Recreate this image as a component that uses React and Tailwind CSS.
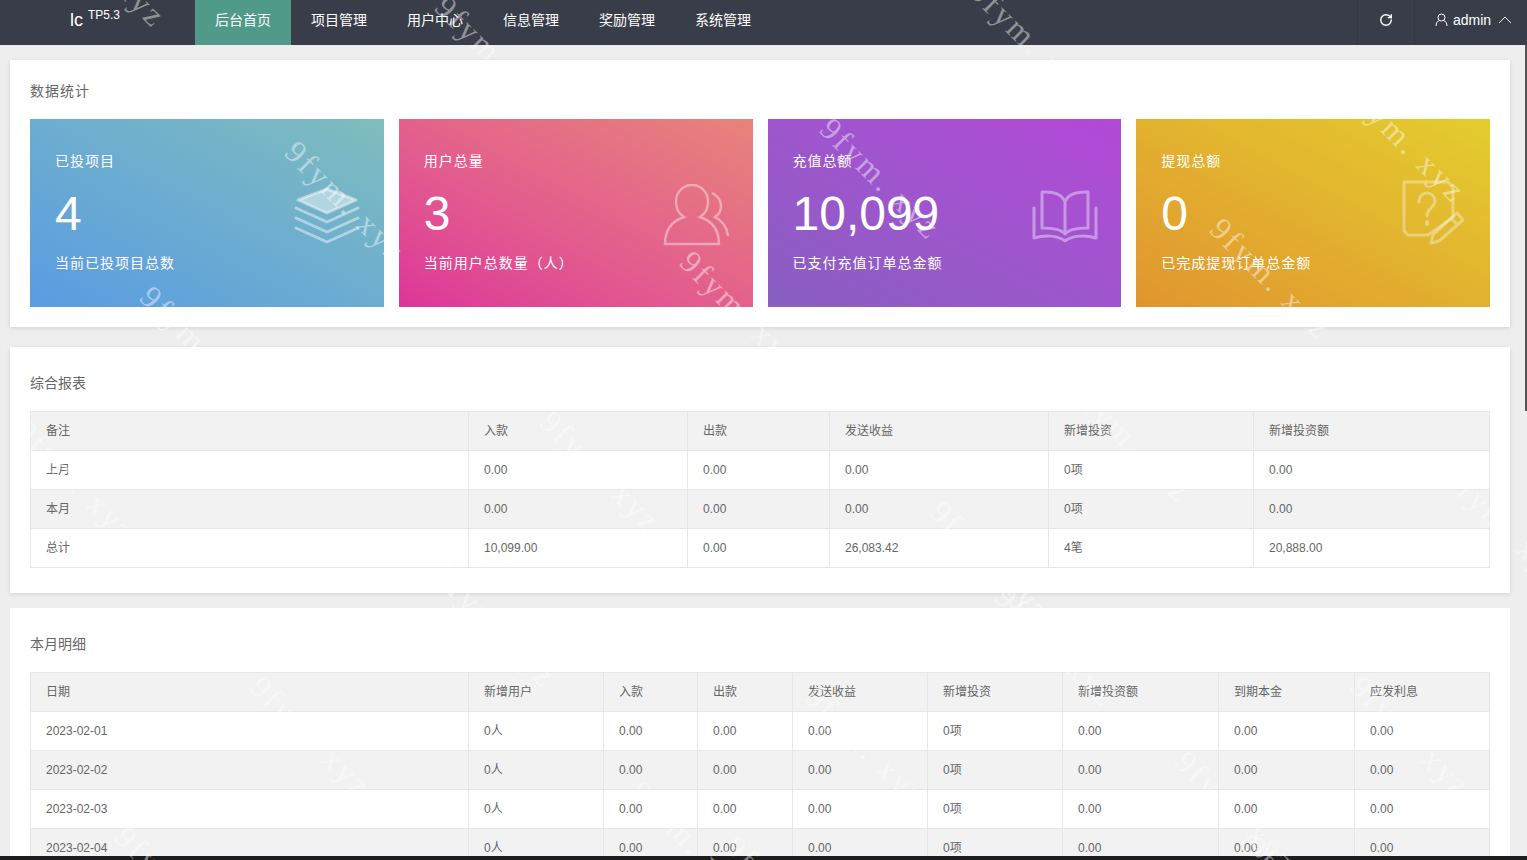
import { RotateCw } from 'lucide-react';

const font = { fontFamily: '"Liberation Sans", "Noto Sans CJK SC", sans-serif' };

const navItems = ['后台首页', '项目管理', '用户中心', '信息管理', '奖励管理', '系统管理'];

const StackIcon = () => (
  <svg width="66" height="58" viewBox="0 0 66 58" className="mt-[6px] text-white/45" fill="none" stroke="currentColor" strokeWidth="3" strokeLinecap="round" strokeLinejoin="round">
    <path d="M33 2 62 13 33 26 4 13Z" fill="currentColor" />
    <path d="M2 21 33 35 64 21" />
    <path d="M2 31 33 45 64 31" />
    <path d="M2 41 33 55 64 41" />
  </svg>
);

const UsersIcon = () => (
  <svg width="66" height="62" viewBox="0 0 66 62" className="mt-[4px] text-white/40" fill="none" stroke="currentColor" strokeWidth="2.4">
    <path d="M2 60h54c0-14-7-23-19-27 5-3 8-9 8-15C45 8 38 1 29 1S13 8 13 18c0 6 3 12 8 15C9 37 2 46 2 60Z" />
    <path d="M49 9c4 2 9 6 9 13 0 5-3 9-6 11 8 4 12 11 13 19" />
  </svg>
);

const BookIcon = () => (
  <svg width="66" height="52" viewBox="0 0 66 52" className="-mr-[1px] mt-[5px] text-white/40" fill="none" stroke="currentColor" strokeWidth="3" strokeLinecap="round" strokeLinejoin="round">
    <path d="M33 12C30 4 22 2 13 2H10v36c10 0 19 1 23 6 4-5 13-6 23-6V2h-3c-9 0-17 2-20 10Zm0 0v32" />
    <path d="M2 18v30c10-3 24-3 31 3 7-6 21-6 31-3V18" />
  </svg>
);

const NoteIcon = () => (
  <svg width="62" height="66" viewBox="0 0 62 66" className="mr-[2px] text-white/35" fill="none" stroke="currentColor" strokeWidth="3" strokeLinejoin="round">
    <path d="M2 2h44l5 5v30L26 55H6l-4-4Z" />
    <path d="M17 22c0-6 4-9 8-9s8 3 8 8c0 6-8 7-8 15" strokeLinecap="round" />
    <path d="M25 42v2" strokeWidth="4" strokeLinecap="round" />
    <path d="M55 33l6 7-24 21-8 2 2-8Zm-6 5 7 7" />
  </svg>
);

const stats = [
  { title: '已投项目', value: '4', note: '当前已投项目总数', bg: 'bg-linear-to-tr from-[#5a9be2] to-[#80bdbd]', icon: <StackIcon /> },
  { title: '用户总量', value: '3', note: '当前用户总数量（人）', bg: 'bg-linear-to-tr from-[#dd3499] to-[#e8837a]', icon: <UsersIcon /> },
  { title: '充值总额', value: '10,099', note: '已支付充值订单总金额', bg: 'bg-linear-to-tr from-[#885fc2] to-[#b348d8]', icon: <BookIcon /> },
  { title: '提现总额', value: '0', note: '已完成提现订单总金额', bg: 'bg-linear-to-tr from-[#e0952f] to-[#e3cd2e]', icon: <NoteIcon /> },
];

const reportWidths = ['w-[438px]', 'w-[219px]', 'w-[142px]', 'w-[219px]', 'w-[205px]', 'w-[236px]'];
const reportHead = ['备注', '入款', '出款', '发送收益', '新增投资', '新增投资额'];
const reportRows = [
  ['上月', '0.00', '0.00', '0.00', '0项', '0.00'],
  ['本月', '0.00', '0.00', '0.00', '0项', '0.00'],
  ['总计', '10,099.00', '0.00', '26,083.42', '4笔', '20,888.00'],
];

const detailWidths = ['w-[438px]', 'w-[135px]', 'w-[94px]', 'w-[95px]', 'w-[135px]', 'w-[135px]', 'w-[156px]', 'w-[136px]', 'w-[135px]'];
const detailHead = ['日期', '新增用户', '入款', '出款', '发送收益', '新增投资', '新增投资额', '到期本金', '应发利息'];
const detailRows = ['2023-02-01', '2023-02-02', '2023-02-03', '2023-02-04'].map((d) => [
  d, '0人', '0.00', '0.00', '0.00', '0项', '0.00', '0.00', '0.00',
]);

// watermark is one repeated string laid over the whole page
const marks = [
  [40, -100], [430, -10], [965, -25], [1340, 75],
  [280, 135], [815, 112], [135, 280], [675, 245], [1205, 212],
  [535, 405], [1065, 375], [1440, 460], [10, 415], [925, 495],
  [245, 670], [1170, 745], [625, 775], [1345, 670],
  [800, 680], [110, 820], [990, 580],
  [430, 560], [720, 830], [1240, 830],
];

const Table = ({ widths, head, rows }) => (
  <table className="w-[1459px] table-fixed border-collapse text-[12px] text-[#666]">
    <thead>
      <tr className="h-[39px] bg-[#f2f2f2]">
        {head.map((h, i) => (
          <th key={h} className={`${widths[i]} border border-[#e6e6e6] px-[15px] text-left font-normal`}>{h}</th>
        ))}
      </tr>
    </thead>
    <tbody>
      {rows.map((row, r) => (
        <tr key={row[0]} className={r % 2 ? 'h-[39px] bg-[#f2f2f2]' : 'h-[39px] bg-white'}>
          {row.map((c, i) => (
            <td key={i} className="border border-[#e6e6e6] px-[15px]">{c}</td>
          ))}
        </tr>
      ))}
    </tbody>
  </table>
);

const App = () => {
  return (
    <div className="relative flex h-screen flex-col overflow-hidden bg-[#eee]" style={font}>
      <header className="flex h-[45px] shrink-0 items-center bg-[#393d49] text-white">
        <div className="flex h-full w-[195px] items-center pb-[5px] pl-[70px]">
          <span className="text-[18px]">lc</span>
          <span className="mb-[10px] ml-[5px] text-[12px]">TP5.3</span>
        </div>
        <nav className="flex h-full">
          {navItems.map((item, i) => (
            <div key={item} className={`flex h-full w-[96px] items-center justify-center pb-[5px] text-[14px] ${i === 0 ? 'bg-[#4f9a88]' : ''}`}>
              {item}
            </div>
          ))}
        </nav>
        <div className="ml-auto flex h-full">
          <div className="flex h-full w-[57px] items-center justify-center border-l border-[#33373f] pb-[5px]">
            <RotateCw size={14} strokeWidth={2.4} className="-ml-[1px]" />
          </div>
          <div className="flex h-full w-[113px] items-center border-l border-[#33373f] pb-[5px] pl-[20px] text-[14px]">
            <svg width="13" height="14" viewBox="0 0 13 14" fill="none" stroke="currentColor" strokeWidth="1" className="mr-[5px]">
              <circle cx="6.5" cy="4.5" r="3.5" />
              <path d="M1 13c0-3 1.5-5 3.5-5.5M12 13c0-3-1.5-5-3.5-5.5" />
            </svg>
            admin
            <svg width="14" height="8" viewBox="0 0 14 8" fill="none" stroke="currentColor" strokeWidth="0.9" className="ml-[7px]">
              <path d="M1 7l6-6 6 6" />
            </svg>
          </div>
        </div>
      </header>

      <main className="min-h-0 flex-1 pl-[10px] pr-[17px] pt-[15px]">
        <section className="h-[267px] bg-white px-[20px] shadow-[0_1px_4px_rgba(0,0,0,0.12)]">
          <h2 className="pb-[17px] pt-[21px] text-[14px] leading-[21px] tracking-[1px] text-[#666]">数据统计</h2>
          <div className="grid grid-cols-4 gap-[15px]">
            {stats.map((s) => (
              <div key={s.title} className={`flex h-[188px] items-center justify-between pl-[25px] pr-[24px] text-white ${s.bg}`}>
                <div className="mb-[2px]">
                  <div className="text-[14px] leading-[20px] tracking-[1px]">{s.title}</div>
                  <div className="mt-[19px] text-[48px] leading-[48px]">{s.value}</div>
                  <div className="mt-[15px] text-[14px] leading-[20px] tracking-[1px]">{s.note}</div>
                </div>
                {s.icon}
              </div>
            ))}
          </div>
        </section>

        <section className="mt-[20px] h-[246px] bg-white px-[20px] shadow-[0_1px_4px_rgba(0,0,0,0.12)]">
          <h2 className="pb-[17px] pt-[26px] text-[14px] leading-[21px] text-[#666]">综合报表</h2>
          <Table widths={reportWidths} head={reportHead} rows={reportRows} />
        </section>

        <section className="mt-[15px] bg-white px-[20px]">
          <h2 className="pb-[17px] pt-[26px] text-[14px] leading-[21px] text-[#666]">本月明细</h2>
          <Table widths={detailWidths} head={detailHead} rows={detailRows} />
        </section>
      </main>

      <div className="h-[4px] shrink-0 bg-[#1d1d1f]" />

      <div className="absolute right-0 top-[45px] h-[366px] w-[2px] bg-[#555]" />

      <div className="pointer-events-none absolute inset-0 overflow-hidden">
        {marks.map(([x, y]) => (
          <span
            key={`${x}-${y}`}
            className="absolute origin-top-left rotate-45 whitespace-nowrap font-['Liberation_Serif',serif] text-[32px] leading-none tracking-[3px] text-white/45"
            style={{ left: x + 22, top: y }}
          >
            9fym. xyz
          </span>
        ))}
      </div>
    </div>
  );
};

export default App;
